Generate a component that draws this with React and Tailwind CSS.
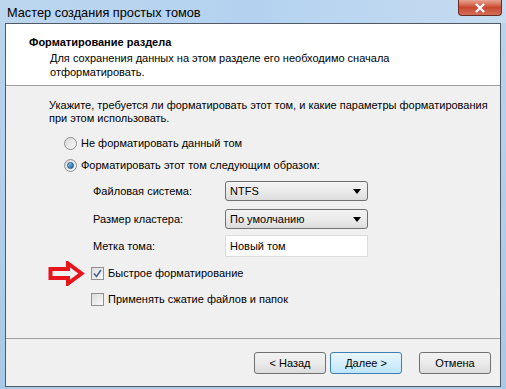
import React from "react";

const font = { fontFamily: '"Liberation Sans", Arial, sans-serif' };

const Radio = ({ checked }) => (
  <div className="w-[13px] h-[13px] rounded-full border border-[#8f8f8f] bg-gradient-to-br from-[#d8d8d8] to-[#fafafa] flex items-center justify-center shrink-0">
    {checked && (
      <div className="w-[7px] h-[7px] rounded-full bg-gradient-to-br from-[#8cd1f7] to-[#1a5f9a] border border-[#205a8c]" />
    )}
  </div>
);

const Checkbox = ({ checked }) => (
  <div className="w-[13px] h-[13px] border border-[#8f8f8f] bg-gradient-to-br from-[#dcdcdc] to-[#fbfbfb] flex items-center justify-center shrink-0">
    {checked && (
      <svg width="9" height="9" viewBox="0 0 9 9">
        <path d="M1 4.5 L3.5 7.5 L8 1" fill="none" stroke="#4a5f97" strokeWidth="1.6" />
      </svg>
    )}
  </div>
);

const Select = ({ value }) => (
  <div className="w-[143px] h-[20px] rounded-[3px] border border-[#707070] bg-gradient-to-b from-[#f2f2f2] via-[#ebebeb] to-[#dcdcdc] flex items-center justify-between pl-[4px] pr-[6px] text-black">
    <span>{value}</span>
    <svg width="8" height="5" viewBox="0 0 8 5">
      <path d="M0 0 H8 L4 5 Z" fill="#000" />
    </svg>
  </div>
);

const Button = ({ label, focused }) => (
  <div
    className={`w-[72px] h-[22px] rounded-[3px] border flex items-center justify-center text-black ${
      focused
        ? "border-[#3c7fb1] bg-gradient-to-b from-[#eaf6fd] to-[#bee6fd]"
        : "border-[#707070] bg-gradient-to-b from-[#f2f2f2] via-[#ebebeb] to-[#dcdcdc]"
    }`}
  >
    {label}
  </div>
);

export default function App() {
  return (
    <div
      className="w-[506px] h-[389px] bg-gradient-to-b from-[#b9d5ef] to-[#a9c9e8] flex flex-col overflow-hidden text-[11px]"
      style={font}
    >
      <div className="h-[23px] flex items-start justify-between shrink-0 bg-gradient-to-r from-[#bcd6ee] via-[#b4d2f0] to-[#c6dcf0]">
        <div className="pl-[7px] pt-[3px] text-[12.75px] text-black">Мастер создания простых томов</div>
        <div className="mr-[4px] w-[44px] h-[16px] rounded-b-[4px] border border-t-0 border-[#6b2a22] bg-gradient-to-b from-[#e8a493] via-[#c9462e] to-[#d2705a] flex items-center justify-center">
          <svg width="12" height="10" viewBox="0 0 12 10">
            <path d="M2 1 L10 9 M10 1 L2 9" stroke="#fff" strokeWidth="2.4" />
          </svg>
        </div>
      </div>
      <div className="mx-[5px] h-[364px] border border-[#4f5a66] bg-[#f0f0f0] flex flex-col text-black">
        <div className="h-[62px] bg-white border-b border-[#a0a0a0] pl-[23px] pt-[12px] shrink-0">
          <div className="font-bold leading-[13px]">Форматирование раздела</div>
          <div className="pl-[21px] pt-[2px] leading-[14px]">
            Для сохранения данных на этом разделе его необходимо сначала
            <br />
            отформатировать.
          </div>
        </div>
        <div className="h-[253px] border-b border-[#a0a0a0] pl-[43px] pt-[13px] shrink-0">
          <div className="leading-[13px] whitespace-nowrap">
            Укажите, требуется ли форматировать этот том, и какие параметры форматирования
            <br />
            при этом использовать.
          </div>
          <div className="pl-[15px] pt-[12px] flex flex-col gap-[9px]">
            <div className="flex items-center gap-[4px] h-[13px]">
              <Radio />
              <span>Не форматировать данный том</span>
            </div>
            <div className="flex items-center gap-[4px] h-[13px]">
              <Radio checked />
              <span>Форматировать этот том следующим образом:</span>
            </div>
          </div>
          <div className="pl-[44px] pt-[9px] flex flex-col">
            <div className="flex items-center">
              <span className="w-[132px]">Файловая система:</span>
              <Select value="NTFS" />
            </div>
            <div className="flex items-center mt-[8px]">
              <span className="w-[132px]">Размер кластера:</span>
              <Select value="По умолчанию" />
            </div>
            <div className="flex items-center mt-[6px]">
              <span className="w-[132px]">Метка тома:</span>
              <div className="w-[143px] h-[22px] border border-[#dcdcdc] bg-white flex items-center pl-[4px]">
                Новый том
              </div>
            </div>
          </div>
          <div className="pt-[4px] flex flex-col gap-[5px] -ml-[1px]">
            <div className="flex items-center">
              <svg width="37" height="25" viewBox="0 0 37 25" className="mr-[6px]">
                <path
                  d="M2.5 8 H20 V2.5 L33.5 12.5 L20 22.5 V17 H2.5 Z"
                  fill="#f0f0f0"
                  stroke="#e8141c"
                  strokeWidth="4"
                  strokeLinejoin="miter"
                />
              </svg>
              <Checkbox checked />
              <span className="pl-[4px]">Быстрое форматирование</span>
            </div>
            <div className="flex items-center pl-[43px]">
              <Checkbox />
              <span className="pl-[4px]">Применять сжатие файлов и папок</span>
            </div>
          </div>
        </div>
        <div className="flex justify-end items-start pt-[13px] pr-[9px] gap-[4px]">
          <Button label="< Назад" />
          <Button label="Далее >" focused />
          <div className="w-[9px]" />
          <Button label="Отмена" />
        </div>
      </div>
    </div>
  );
}
